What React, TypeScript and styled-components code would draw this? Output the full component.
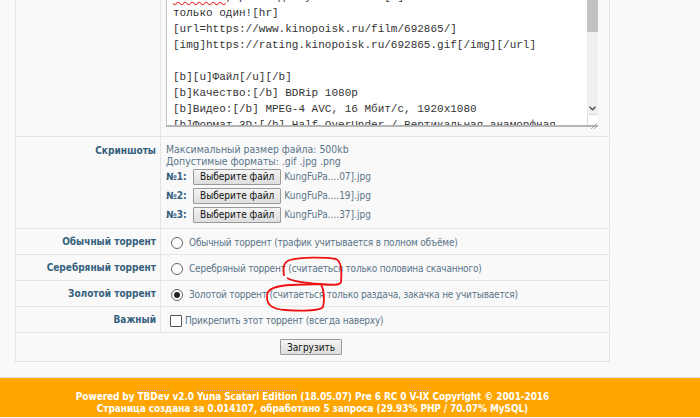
import styled, { createGlobalStyle } from "styled-components";

const GlobalStyle = createGlobalStyle`
  body {
    margin: 0;
    background: #f9f9f9;
    font-family: "DejaVu Sans Condensed", "Liberation Sans", Arial, sans-serif;
  }
`;

const Frame = styled.div`
  position: relative;
  width: 700px;
  height: 418px;
  overflow: hidden;
`;

const Content = styled.div`
  margin-top: -38px;
  padding-left: 15px;
  width: 595px;
`;

const Table = styled.div`
  display: grid;
  grid-template-columns: 145px 1fr;
  border: 1px solid #e4e4e4;
  background: #f9f9f9;
`;

const Label = styled.div<{ $pad?: number }>`
  box-sizing: border-box;
  border-right: 1px solid #e4e4e4;
  border-bottom: 1px solid #e4e4e4;
  padding: ${(p) => p.$pad ?? 5}px 4px 0 0;
  text-align: right;
  font-size: 10px;
  line-height: 15px;
  font-weight: bold;
  color: #36617e;
`;

const Value = styled.div<{ $height?: number }>`
  box-sizing: border-box;
  border-bottom: 1px solid #e4e4e4;
  padding: 2px 5px 0;
  font-size: 10px;
  letter-spacing: -0.2px;
  color: #5a7488;
  ${(p) => (p.$height ? `height: ${p.$height}px;` : "")}
  display: flex;
  align-items: center;
`;

const EditorCell = styled.div`
  padding: 4px 11px 9px 5px;
  border-bottom: 1px solid #e4e4e4;
`;

const Editor = styled.div`
  display: flex;
  height: 160px;
  background: #fff;
  border-left: 1px solid #c4c4c4;
  border-bottom: 2px solid #b5b5b5;
  box-sizing: border-box;
`;

const EditorText = styled.div`
  flex: 1;
  overflow: hidden;
  padding: 6px 0 0 6px;
  font-family: "Liberation Mono", "Courier New", monospace;
  font-size: 11px;
  line-height: 16px;
  color: #333;
  white-space: pre;
`;

const Misspelled = styled.span`
  text-decoration: underline wavy #e33;
  text-underline-offset: 1px;
`;

const ScrollBar = styled.div`
  width: 11px;
  display: flex;
  flex-direction: column;
  background: #f0f0f0;
`;

const Thumb = styled.div`
  height: 65px;
  background: #c1c1c1;
`;

const Track = styled.div`
  flex: 1;
`;

const Arrow = styled.div`
  height: 11px;
  display: flex;
  align-items: center;
  justify-content: center;
`;

const Grip = styled.div`
  height: 10px;
  background: #fff;
  border-top: 1px solid #ddd;
  border-left: 1px solid #ddd;
`;

const ShotsCell = styled.div`
  padding: 6px 5px 4px;
  border-bottom: 1px solid #e4e4e4;
  font-size: 10px;
  color: #5a7488;
`;

const InfoLine = styled.div`
  font-size: 10.4px;
  line-height: 12px;
`;

const FileRow = styled.div`
  display: flex;
  align-items: center;
  height: 19px;
`;

const FileNum = styled.span`
  font-weight: bold;
  color: #36617e;
  width: 27px;
`;

const Button = styled.button`
  font-family: "DejaVu Sans Condensed", "Liberation Sans", Arial, sans-serif;
  font-size: 10px;
  line-height: 13px;
  height: 16px;
  padding: 0 6px;
  margin: 0 3px 0 0;
  color: #111;
  background: linear-gradient(#f4f4f4, #dedede);
  border: 1px solid #9a9a9a;
  border-radius: 1px;
`;

const Radio = styled.span<{ $checked?: boolean }>`
  box-sizing: border-box;
  width: 12px;
  height: 12px;
  margin: 0 6px 0 5px;
  border-radius: 50%;
  border: 1px solid #666;
  background: #fff;
  display: inline-flex;
  align-items: center;
  justify-content: center;
  &::after {
    content: "";
    width: 6px;
    height: 6px;
    border-radius: 50%;
    background: ${(p) => (p.$checked ? "#222" : "transparent")};
  }
`;

const Check = styled.span`
  box-sizing: border-box;
  width: 12px;
  height: 12px;
  margin: 0 3px 0 4px;
  border: 1px solid #555;
  border-radius: 1px;
  background: #fff;
`;

const SubmitRow = styled.div`
  grid-column: 1 / -1;
  height: 28px;
  display: flex;
  align-items: center;
  justify-content: center;
`;

const Footer = styled.div`
  margin-top: 15px;
  border-top: 1px solid #dedede;
  background: #ffa500;
  height: 40px;
  box-sizing: border-box;
  padding-top: 13px;
`;

const FooterText = styled.div`
  width: 625px;
  text-align: center;
  color: #fff;
  font-family: "DejaVu Sans Condensed", "Liberation Sans", sans-serif;
  font-weight: bold;
  font-size: 10px;
  letter-spacing: -0.1px;
  line-height: 12px;
`;

const FooterLink = styled.span`
  border-top: 1px dotted #8aa6c8;
`;

const Scribbles = styled.svg`
  position: absolute;
  left: 0;
  top: 0;
  pointer-events: none;
`;

const editorLines = [
  "[b]Кунг-фу Панда 3 / Kung Fu Panda 3[/b]",
  null,
  "только один![hr]",
  "[url=https://www.kinopoisk.ru/film/692865/]",
  "[img]https://rating.kinopoisk.ru/692865.gif[/img][/url]",
  "",
  "[b][u]Файл[/u][/b]",
  "[b]Качество:[/b] BDRip 1080p",
  "[b]Видео:[/b] MPEG-4 AVC, 16 Мбит/с, 1920x1080",
  "[b]Формат 3D:[/b] Half OverUnder / Вертикальная анаморфная",
  "[b]Аудио:[/b] Русский (AC3, 6 ch, 448 Кбит/с)",
];

const files = [
  { n: "№1:", name: "KungFuPa....07].jpg" },
  { n: "№2:", name: "KungFuPa....19].jpg" },
  { n: "№3:", name: "KungFuPa....37].jpg" },
];

const torrents = [
  { label: "Обычный торрент", text: "Обычный торрент (трафик учитывается в полном объёме)", checked: false },
  { label: "Серебряный торрент", text: "Серебряный торрент (считаеться только половина скачанного)", checked: false },
  { label: "Золотой торрент", text: "Золотой торрент (считаеться только раздача, закачка не учитывается)", checked: true },
];

export default function App() {
  return (
    <Frame>
      <GlobalStyle />
      <Content>
        <Table>
          <Label />
          <EditorCell>
            <Editor>
              <EditorText>
                {editorLines.map((line, i) =>
                  line === null ? (
                    <div key={i}>
                      <Misspelled>Внимание</Misspelled>, релиз доступен        [b]
                    </div>
                  ) : (
                    <div key={i}>{line || " "}</div>
                  )
                )}
              </EditorText>
              <ScrollBar>
                <Thumb />
                <Track />
                <Arrow>
                  <svg width="7" height="5" viewBox="0 0 7 5">
                    <path d="M0.5 0.8 L3.5 3.8 L6.5 0.8" fill="none" stroke="#505050" strokeWidth="1.5" />
                  </svg>
                </Arrow>
                <Grip>
                  <svg width="10" height="10" viewBox="0 0 10 10">
                    <path d="M9 3 L3 9 M9 6 L6 9" stroke="#999" strokeWidth="0.8" />
                  </svg>
                </Grip>
              </ScrollBar>
            </Editor>
          </EditorCell>

          <Label $pad={6}>Скриншоты</Label>
          <ShotsCell>
            <InfoLine>Максимальный размер файла: 500kb</InfoLine>
            <InfoLine>Допустимые форматы: .gif .jpg .png</InfoLine>
            {files.map((f) => (
              <FileRow key={f.n}>
                <FileNum>{f.n}</FileNum>
                <Button>Выберите файл</Button>
                <span>{f.name}</span>
              </FileRow>
            ))}
          </ShotsCell>

          {torrents.map((t) => (
            <>
              <Label key={t.label + "l"}>{t.label}</Label>
              <Value key={t.label + "v"} $height={26}>
                <Radio $checked={t.checked} />
                {t.text}
              </Value>
            </>
          ))}

          <Label>Важный</Label>
          <Value $height={26}>
            <Check />
            Прикрепить этот торрент (всегда наверху)
          </Value>

          <SubmitRow>
            <Button>Загрузить</Button>
          </SubmitRow>
        </Table>
      </Content>
      <Footer>
        <FooterText>
          Powered by <FooterLink>TBDev</FooterLink> v2.0 <FooterLink>Yuna Scatari Edition</FooterLink> (18.05.07) Pre 6 RC 0{" "}
          <FooterLink>V-IX</FooterLink> Copyright © 2001-2016
          <br />
          Страница создана за 0.014107, обработано 5 запроса (29.93% PHP / 70.07% MySQL)
        </FooterText>
      </Footer>
      <Scribbles width="700" height="418" viewBox="0 0 700 418">
        <path
          d="M284 276 C283 268 283 262 290 260 C300 257 325 257 336 259 C341 261 342 270 341 282 C340 286 330 285 320 284 C305 283 292 281 287 278"
          fill="none"
          stroke="#ee1111"
          strokeWidth="1.8"
        />
        <path
          d="M267 297 C266 289 275 286 290 285 L321 284 C324 290 325 300 323 307 C320 311 300 311 285 310 C272 309 267 305 267 297"
          fill="none"
          stroke="#ee1111"
          strokeWidth="1.8"
        />
      </Scribbles>
    </Frame>
  );
}
